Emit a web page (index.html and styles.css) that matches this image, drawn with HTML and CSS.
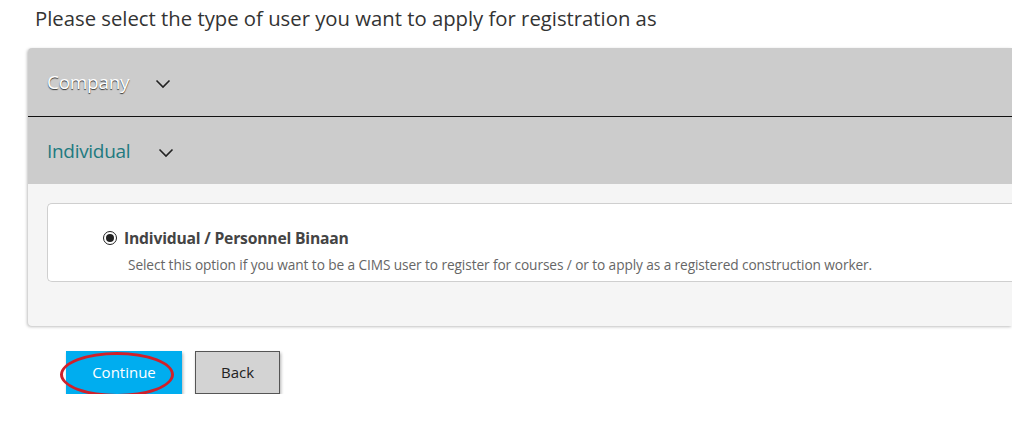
FILE: index.html
```html
<!DOCTYPE html>
<html>
<head>
<meta charset="utf-8">
<link rel="stylesheet" href="styles.css">
</head>
<body>
<div class="page">
  <h1 class="title">Please select the type of user you want to apply for registration as</h1>
  <div class="panel">
    <div class="acc-head company">
      <span class="acc-label">Company</span>
      <svg class="chev" width="16" height="10" viewBox="0 0 16 10"><path d="M1.5 1.5 L8 8 L14.5 1.5" fill="none" stroke="#222" stroke-width="1.6"/></svg>
    </div>
    <div class="acc-head individual">
      <span class="acc-label">Individual</span>
      <svg class="chev" width="16" height="10" viewBox="0 0 16 10"><path d="M1.5 1.5 L8 8 L14.5 1.5" fill="none" stroke="#222" stroke-width="1.6"/></svg>
    </div>
    <div class="acc-body">
      <div class="option-card">
        <div class="option-row">
          <span class="radio"><span class="dot"></span></span>
          <span class="option-label">Individual / Personnel Binaan</span>
        </div>
        <div class="option-desc">Select this option if you want to be a CIMS user to register for courses / or to apply as a registered construction worker.</div>
      </div>
    </div>
  </div>
  <div class="actions">
    <div class="btn-wrap">
      <button class="btn btn-primary">Continue</button>
      <span class="ring"></span>
    </div>
    <button class="btn btn-back">Back</button>
  </div>
</div>
</body>
</html>
```
FILE: styles.css
```css
html, body {
  margin: 0;
  padding: 0;
  background: #ffffff;
}
body {
  font-family: "Open Sans", "Noto Sans", sans-serif;
  color: #333;
}
.page {
  padding: 0 0 0 28px;
}
.title {
  margin: 0;
  padding: 4px 0 0 7px;
  height: 48px;
  box-sizing: border-box;
  font-size: 20.3px;
  font-weight: 400;
  color: #333;
  white-space: nowrap;
}
.panel {
  background: #f5f5f5;
  border-radius: 4px 0 0 4px;
  box-shadow: -1px 1px 3px rgba(0,0,0,0.25);
  overflow: hidden;
  height: 278px;
}
.acc-head {
  background: #cccccc;
  display: flex;
  align-items: center;
  padding-left: 19px;
  box-sizing: border-box;
}
.company {
  height: 69px;
  border-bottom: 1px solid #111;
}
.individual {
  height: 67px;
}
.acc-label {
  font-size: 19px;
  letter-spacing: -0.3px;
}
.company .acc-label {
  color: #fff;
  text-shadow: 0 1px 1px #333;
}
.individual .acc-label {
  color: #217a80;
}
.chev {
  margin-left: 26px;
  margin-top: 4px;
}
.individual .chev {
  margin-left: 28px;
}
.acc-body {
  padding: 19px 0 0 19px;
}
.option-card {
  background: #fff;
  border: 1px solid #cfcfcf;
  border-right: none;
  border-radius: 5px 0 0 5px;
  height: 79px;
  box-sizing: border-box;
  padding: 23px 0 0 55px;
}
.option-row {
  display: flex;
  align-items: center;
  gap: 7px;
}
.radio {
  width: 12px;
  height: 12px;
  border: 1.5px solid #222;
  border-radius: 50%;
  display: flex;
  align-items: center;
  justify-content: center;
  background: #fff;
}
.dot {
  width: 8px;
  height: 8px;
  border-radius: 50%;
  background: #222;
}
.option-label {
  font-size: 15.7px;
  font-weight: 700;
  color: #444;
  letter-spacing: -0.2px;
}
.option-desc {
  margin: 6px 0 0 25px;
  font-size: 13.7px;
  color: #666;
  letter-spacing: -0.1px;
  white-space: nowrap;
}
.actions {
  display: flex;
  align-items: flex-start;
  gap: 13px;
  padding: 25px 0 0 38px;
}
.btn-wrap {
  position: relative;
}
.btn {
  font-family: "Open Sans", "Noto Sans", sans-serif;
  font-size: 15px;
  height: 43px;
  padding: 0 0 2px;
  cursor: pointer;
}
.btn-primary {
  width: 116px;
  background: #00adef;
  color: #fff;
  border: none;
  box-shadow: 1px 2px 3px rgba(0,0,0,0.3);
}
.btn-back {
  width: 85px;
  background: #d3d3d3;
  color: #222;
  border: 1px solid #555;
  box-shadow: 1px 2px 3px rgba(0,0,0,0.3);
}
.ring {
  position: absolute;
  left: -6px;
  top: 1px;
  width: 108px;
  height: 39px;
  border: 3.5px solid #d0202a;
  border-radius: 50%;
  pointer-events: none;
}
```
